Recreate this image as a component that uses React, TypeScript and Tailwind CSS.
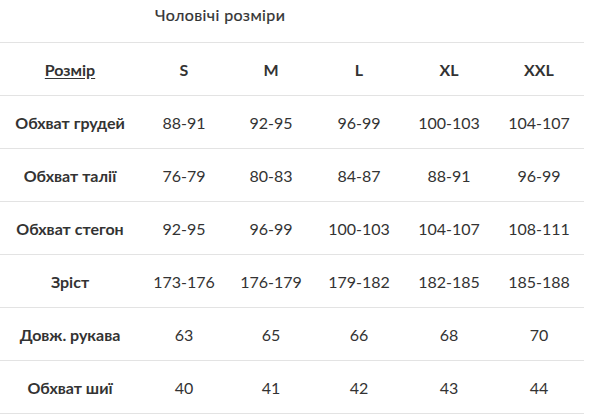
import React from "react";

const cols = ["S", "M", "L", "XL", "XXL"];
const rows: [string, string[]][] = [
  ["Обхват грудей", ["88-91", "92-95", "96-99", "100-103", "104-107"]],
  ["Обхват талії", ["76-79", "80-83", "84-87", "88-91", "96-99"]],
  ["Обхват стегон", ["92-95", "96-99", "100-103", "104-107", "108-111"]],
  ["Зріст", ["173-176", "176-179", "179-182", "182-185", "185-188"]],
  ["Довж. рукава", ["63", "65", "66", "68", "70"]],
  ["Обхват шиї", ["40", "41", "42", "43", "44"]],
];

export default function App() {
  return (
    <div
      className="w-[592px] h-[416px] bg-white text-[#333333] overflow-hidden"
      style={{ fontFamily: "Lato, 'Open Sans', sans-serif" }}
    >
      <div className="h-[42px] pt-[5px] pl-[155px] text-[16px] leading-[19px] tracking-[0.4px] [-webkit-text-stroke:0.2px_#333333]">
        Чоловічі розміри
      </div>
      <div className="w-[584px] border-t border-[#e3e3e3]">
        <div className="grid grid-cols-[140px_88px_86px_90px_90px_90px] h-[53px] border-b border-[#e3e3e3] items-center text-center text-[16px] leading-[19px] font-bold">
          <div className="underline underline-offset-2">Розмір</div>
          {cols.map((c) => (
            <div key={c}>{c}</div>
          ))}
        </div>
        {rows.map(([label, vals]) => (
          <div
            key={label}
            className="grid grid-cols-[140px_88px_86px_90px_90px_90px] h-[53px] border-b border-[#e3e3e3] items-center text-center text-[16px] leading-[19px]"
          >
            <div className="font-bold">{label}</div>
            {vals.map((v, i) => (
              <div key={i}>{v}</div>
            ))}
          </div>
        ))}
      </div>
    </div>
  );
}
